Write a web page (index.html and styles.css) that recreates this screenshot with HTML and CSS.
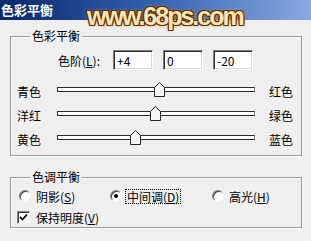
FILE: index.html
```html
<!DOCTYPE html>
<html lang="zh">
<head>
    <meta charset="UTF-8">
    <meta name="viewport" content="width=device-width, initial-scale=1.0">
    <title>色彩平衡</title>
    <link rel="stylesheet" href="styles.css">
</head>
<body>
    <div class="window">
        <div class="titlebar">色彩平衡</div>
        <div class="watermark">www.68ps.com</div>
        <div class="dialog">
            <fieldset class="group group-color">
                <legend>色彩平衡</legend>
                <div class="levels">
                    <label for="level-1">色阶(<u>L</u>):</label>
                    <input type="text" id="level-1" class="level" value="+4">
                    <input type="text" class="level" value="0">
                    <input type="text" class="level" value="-20">
                </div>
                <div class="slider-row">
                    <span class="side">青色</span>
                    <div class="track">
                        <span class="thumb" style="left: 52%;"><svg width="11" height="15" viewBox="0 0 11 15"><path d="M0.5 14.5V5.5L5.5 0.5L10.5 5.5V14.5Z" fill="#f6f6f6" stroke="#222"/></svg></span>
                    </div>
                    <span class="side-right">红色</span>
                </div>
                <div class="slider-row">
                    <span class="side">洋红</span>
                    <div class="track">
                        <span class="thumb" style="left: 50%;"><svg width="11" height="15" viewBox="0 0 11 15"><path d="M0.5 14.5V5.5L5.5 0.5L10.5 5.5V14.5Z" fill="#f6f6f6" stroke="#222"/></svg></span>
                    </div>
                    <span class="side-right">绿色</span>
                </div>
                <div class="slider-row">
                    <span class="side">黄色</span>
                    <div class="track">
                        <span class="thumb" style="left: 40%;"><svg width="11" height="15" viewBox="0 0 11 15"><path d="M0.5 14.5V5.5L5.5 0.5L10.5 5.5V14.5Z" fill="#f6f6f6" stroke="#222"/></svg></span>
                    </div>
                    <span class="side-right">蓝色</span>
                </div>
            </fieldset>

            <fieldset class="group group-tone">
                <legend>色调平衡</legend>
                <div class="tones">
                    <label class="option"><span class="radio"></span><span class="caption">阴影(<u>S</u>)</span></label>
                    <label class="option"><span class="radio checked"></span><span class="caption focused">中间调(<u>D</u>)</span></label>
                    <label class="option"><span class="radio"></span><span class="caption">高光(<u>H</u>)</span></label>
                </div>
                <label class="option keep">
                    <span class="checkbox"><svg width="9" height="9" viewBox="0 0 9 9"><path d="M1 4L3.5 6.5L8 1.5" fill="none" stroke="#000" stroke-width="1.8"/></svg></span>
                    <span class="caption">保持明度(<u>V</u>)</span>
                </label>
            </fieldset>
        </div>
    </div>
</body>
</html>
```

FILE: styles.css
```css
body {
    margin: 0;
    background-color: #efefef;
    font-family: "Noto Sans CJK SC", sans-serif;
    font-size: 12px;
    color: #000;
}
.window {
    position: relative;
    width: 311px;
    height: 241px;
    overflow: hidden;
}
.titlebar {
    height: 20px;
    padding-left: 1px;
    line-height: 20px;
    font-size: 13px;
    font-weight: bold;
    color: #fff;
    background: linear-gradient(90deg, #0b2769 0%, #3462b2 50%, #8aa9de 100%);
}
/* watermark sits over the title bar and the dialog */
.watermark {
    position: absolute;
    left: 87px;
    top: 4px;
    font-family: "Liberation Sans", Arial, sans-serif;
    font-size: 25px;
    font-weight: bold;
    line-height: 25px;
    letter-spacing: -2px;
    color: #fde6b2;
    text-shadow:
        1px 0 0 #5c300c, -1px 0 0 #5c300c, 0 1px 0 #5c300c, 0 -1px 0 #5c300c,
        1px 1px 0 #5c300c, -1px -1px 0 #5c300c, 1px -1px 0 #5c300c, -1px 1px 0 #5c300c,
        0 0 4px #e8902c;
}
.dialog {
    padding: 9px 9px 0 10px;
}
.group {
    margin: 0;
    border: 1px solid #9a9a9a;
    box-shadow: inset 1px 1px 0 #fff, 1px 1px 0 #fff;
    min-inline-size: 0;
}
.group legend {
    margin-left: 13px;
    padding: 0 2px;
    line-height: 14px;
}
.group-color {
    padding: 7px 4px 4px 6px;
}
.group-tone {
    margin-top: 14px;
    padding: 4px 8px 2px 6px;
}
.levels {
    display: flex;
    align-items: center;
    gap: 10px;
    height: 20px;
    padding-left: 41px;
}
.levels label {
    width: 46px;
    margin-right: -1px;
    white-space: nowrap;
}
.level {
    box-sizing: border-box;
    width: 40px;
    height: 20px;
    margin: 0;
    padding: 0 3px;
    font-family: inherit;
    font-size: 12px;
    background-color: #fff;
    border: 1px solid;
    border-color: #7a7a7a #ffffff #ffffff #7a7a7a;
    box-shadow: inset 1px 1px 0 #303030, inset -1px -1px 0 #d8d8d8;
    outline: none;
}
.slider-row {
    display: flex;
    align-items: center;
    height: 24px;
}
.levels + .slider-row {
    margin-top: 9px;
}
.side {
    width: 40px;
    flex-shrink: 0;
}
.side-right {
    flex-shrink: 0;
    white-space: nowrap;
}
.track {
    position: relative;
    flex-shrink: 0;
    box-sizing: border-box;
    width: 198px;
    height: 5px;
    margin-right: 14px;
    margin-top: -3px;
    background-color: #fff;
    border: 1px solid #2a2a2a;
    border-right-color: #808080;
}
.thumb {
    position: absolute;
    top: -6px;
    margin-left: -6px;
    line-height: 0;
}
.tones {
    display: grid;
    grid-template-columns: 91px 102px auto;
    height: 16px;
    padding-left: 2px;
    align-items: center;
}
.option {
    display: flex;
    align-items: center;
    gap: 3px;
}
.caption {
    padding: 0 1px;
    line-height: 13px;
    border: 1px solid transparent;
}
.caption.focused {
    border: 1px dotted #000;
}
.radio {
    position: relative;
    box-sizing: border-box;
    width: 12px;
    height: 12px;
    border-radius: 50%;
    background-color: #fff;
    border: 1px solid;
    border-color: #808080 #f4f4f4 #f4f4f4 #808080;
    box-shadow: inset 1px 1px 0 #404040;
}
.radio.checked::after {
    content: "";
    position: absolute;
    left: 3px;
    top: 3px;
    width: 4px;
    height: 4px;
    border-radius: 50%;
    background-color: #000;
}
.keep {
    height: 16px;
    margin-top: 5px;
    gap: 4px;
}
.checkbox {
    box-sizing: border-box;
    display: flex;
    align-items: center;
    justify-content: center;
    width: 13px;
    height: 13px;
    background-color: #fff;
    border: 1px solid;
    border-color: #808080 #f4f4f4 #f4f4f4 #808080;
    box-shadow: inset 1px 1px 0 #404040;
}
```
